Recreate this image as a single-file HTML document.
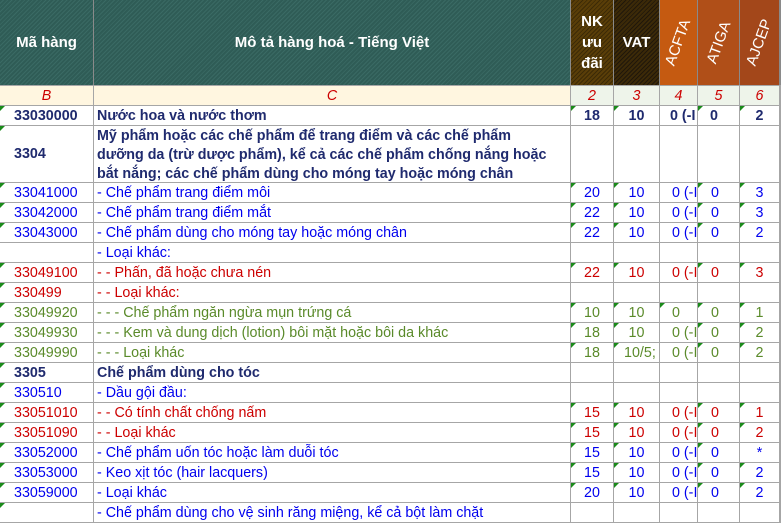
<!DOCTYPE html><html><head><meta charset="utf-8"><style>
*{box-sizing:border-box;margin:0;padding:0}
body{width:781px;height:508px;overflow:hidden;background:#fff;font-family:"Liberation Sans",Arial,sans-serif;font-size:14.3px}
.r{display:flex;height:20px;border-bottom:1px solid #a6a6a6}
.r>div{border-right:1px solid #a6a6a6;height:100%;white-space:nowrap;overflow:hidden;position:relative;line-height:20px}
.c0{width:94px;padding-left:14px}.c1{width:477px;padding-left:3px}.c2{width:43px;text-align:center}.c3{width:46px;text-align:center}.c4{width:38px;padding-left:12px}.c5{width:42px;padding-left:13px}.c6{width:40px;text-align:center}.c7{width:1px}
.g::before{content:"";position:absolute;left:0;top:0;border-top:5px solid #1a8a1a;border-right:5px solid transparent}
.b{color:#0000ee}.rd{color:#cc0000}.gr{color:#5a8a2a}.n{color:#1f2a6e;font-weight:bold}
.h{height:86px;border-bottom:1px solid #a6a6a6}
.h>div{color:#fff;font-weight:bold;font-size:15px;display:flex;align-items:center;justify-content:center;border-right:1px solid #8a8a8a;text-align:center;line-height:21px}
.teal{background:repeating-linear-gradient(135deg,#2f5c56 0 2px,#3a6a64 2px 3px)}
.nk{background:repeating-linear-gradient(135deg,#5a3e08 0 2px,#3c2a06 2px 3px)}
.vat{background:repeating-linear-gradient(135deg,#3c2a08 0 2px,#20170a 2px 3px)}
.rot span{display:inline-block;transform:rotate(-70deg);font-weight:normal;font-size:15px;white-space:nowrap}
.bc>div{font-style:italic;color:#cc0000;text-align:center;padding:0}
</style></head><body>
<div class="r h">
<div class="c0 teal" style="padding:0">Mã hàng</div>
<div class="c1 teal" style="padding:0">Mô tả hàng hoá - Tiếng Việt</div>
<div class="c2 nk">NK<br>ưu<br>đãi</div>
<div class="c3 vat">VAT</div>
<div class="c4 rot" style="background:#c55a11;padding:0"><span>ACFTA</span></div>
<div class="c5 rot" style="background:#b04f18;padding:0"><span>ATIGA</span></div>
<div class="c6 rot" style="background:#a3471a;padding:0"><span>AJCEP</span></div>
<div class="c7" style="background:#a3471a"></div>
</div>
<div class="r bc">
<div class="c0" style="background:#fff6e0">B</div><div class="c1" style="background:#fff6e0">C</div><div class="c2" style="background:#eef4ea">2</div><div class="c3" style="background:#eef4ea">3</div><div class="c4" style="background:#eef4ea">4</div><div class="c5" style="background:#eef4ea">5</div><div class="c6" style="background:#eef4ea">6</div><div class="c7"></div>
</div>
<div class="r n"><div class="c0 g">33030000</div><div class="c1">Nước hoa và nước thơm</div><div class="c2 g">18</div><div class="c3 g">10</div><div class="c4" style="padding-left:10px">0 (-I</div><div class="c5 g" style="padding-left:12px">0</div><div class="c6 g">2</div><div class="c7 g"></div></div>
<div class="r n" style="height:57px"><div class="c0 g" style="line-height:56px">3304</div><div class="c1" style="line-height:19px;padding:1px 0 0 3px">Mỹ phẩm hoặc các chế phẩm để trang điểm và các chế phẩm<br>dưỡng da (trừ dược phẩm), kể cả các chế phẩm chống nắng hoặc<br>bắt nắng; các chế phẩm dùng cho móng tay hoặc móng chân</div><div class="c2"></div><div class="c3"></div><div class="c4"></div><div class="c5"></div><div class="c6"></div><div class="c7"></div></div>
<div class="r b"><div class="c0 g">33041000</div><div class="c1">- Chế phẩm trang điểm môi</div><div class="c2 g">20</div><div class="c3 g">10</div><div class="c4">0 (-I</div><div class="c5 g">0</div><div class="c6 g">3</div><div class="c7 g"></div></div>
<div class="r b"><div class="c0 g">33042000</div><div class="c1">- Chế phẩm trang điểm mắt</div><div class="c2 g">22</div><div class="c3 g">10</div><div class="c4">0 (-I</div><div class="c5 g">0</div><div class="c6 g">3</div><div class="c7 g"></div></div>
<div class="r b"><div class="c0 g">33043000</div><div class="c1">- Chế phẩm dùng cho móng tay hoặc móng chân</div><div class="c2 g">22</div><div class="c3 g">10</div><div class="c4">0 (-I</div><div class="c5 g">0</div><div class="c6 g">2</div><div class="c7 g"></div></div>
<div class="r b"><div class="c0"></div><div class="c1">- Loại khác:</div><div class="c2"></div><div class="c3"></div><div class="c4"></div><div class="c5"></div><div class="c6"></div><div class="c7"></div></div>
<div class="r rd"><div class="c0 g">33049100</div><div class="c1">- - Phấn, đã hoặc chưa nén</div><div class="c2 g">22</div><div class="c3 g">10</div><div class="c4">0 (-I</div><div class="c5 g">0</div><div class="c6 g">3</div><div class="c7 g"></div></div>
<div class="r rd"><div class="c0 g">330499</div><div class="c1">- - Loại khác:</div><div class="c2"></div><div class="c3"></div><div class="c4"></div><div class="c5"></div><div class="c6"></div><div class="c7"></div></div>
<div class="r gr"><div class="c0 g">33049920</div><div class="c1">- - - Chế phẩm ngăn ngừa mụn trứng cá</div><div class="c2 g">10</div><div class="c3 g">10</div><div class="c4 g">0</div><div class="c5 g">0</div><div class="c6 g">1</div><div class="c7 g"></div></div>
<div class="r gr"><div class="c0 g">33049930</div><div class="c1">- - - Kem và dung dịch (lotion) bôi mặt hoặc bôi da khác</div><div class="c2 g">18</div><div class="c3 g">10</div><div class="c4">0 (-I</div><div class="c5 g">0</div><div class="c6 g">2</div><div class="c7 g"></div></div>
<div class="r gr"><div class="c0 g">33049990</div><div class="c1">- - - Loại khác</div><div class="c2 g">18</div><div class="c3 g" style="text-align:left;padding-left:10px">10/5;</div><div class="c4">0 (-I</div><div class="c5 g">0</div><div class="c6 g">2</div><div class="c7 g"></div></div>
<div class="r n"><div class="c0 g">3305</div><div class="c1">Chế phẩm dùng cho tóc</div><div class="c2"></div><div class="c3"></div><div class="c4"></div><div class="c5"></div><div class="c6"></div><div class="c7"></div></div>
<div class="r b"><div class="c0 g">330510</div><div class="c1">- Dầu gội đầu:</div><div class="c2"></div><div class="c3"></div><div class="c4"></div><div class="c5"></div><div class="c6"></div><div class="c7"></div></div>
<div class="r rd"><div class="c0 g">33051010</div><div class="c1">- - Có tính chất chống nấm</div><div class="c2 g">15</div><div class="c3 g">10</div><div class="c4">0 (-I</div><div class="c5 g">0</div><div class="c6 g">1</div><div class="c7 g"></div></div>
<div class="r rd"><div class="c0 g">33051090</div><div class="c1">- - Loại khác</div><div class="c2 g">15</div><div class="c3 g">10</div><div class="c4">0 (-I</div><div class="c5 g">0</div><div class="c6 g">2</div><div class="c7 g"></div></div>
<div class="r b"><div class="c0 g">33052000</div><div class="c1">- Chế phẩm uốn tóc hoặc làm duỗi tóc</div><div class="c2 g">15</div><div class="c3 g">10</div><div class="c4">0 (-I</div><div class="c5 g">0</div><div class="c6">*</div><div class="c7 g"></div></div>
<div class="r b"><div class="c0 g">33053000</div><div class="c1">- Keo xịt tóc (hair lacquers)</div><div class="c2 g">15</div><div class="c3 g">10</div><div class="c4">0 (-I</div><div class="c5 g">0</div><div class="c6 g">2</div><div class="c7 g"></div></div>
<div class="r b"><div class="c0 g">33059000</div><div class="c1">- Loại khác</div><div class="c2 g">20</div><div class="c3 g">10</div><div class="c4">0 (-I</div><div class="c5 g">0</div><div class="c6 g">2</div><div class="c7 g"></div></div>
<div class="r b"><div class="c0 g"></div><div class="c1">- Chế phẩm dùng cho vệ sinh răng miệng, kể cả bột làm chặt</div><div class="c2"></div><div class="c3"></div><div class="c4"></div><div class="c5"></div><div class="c6"></div><div class="c7"></div></div>
</body></html>
